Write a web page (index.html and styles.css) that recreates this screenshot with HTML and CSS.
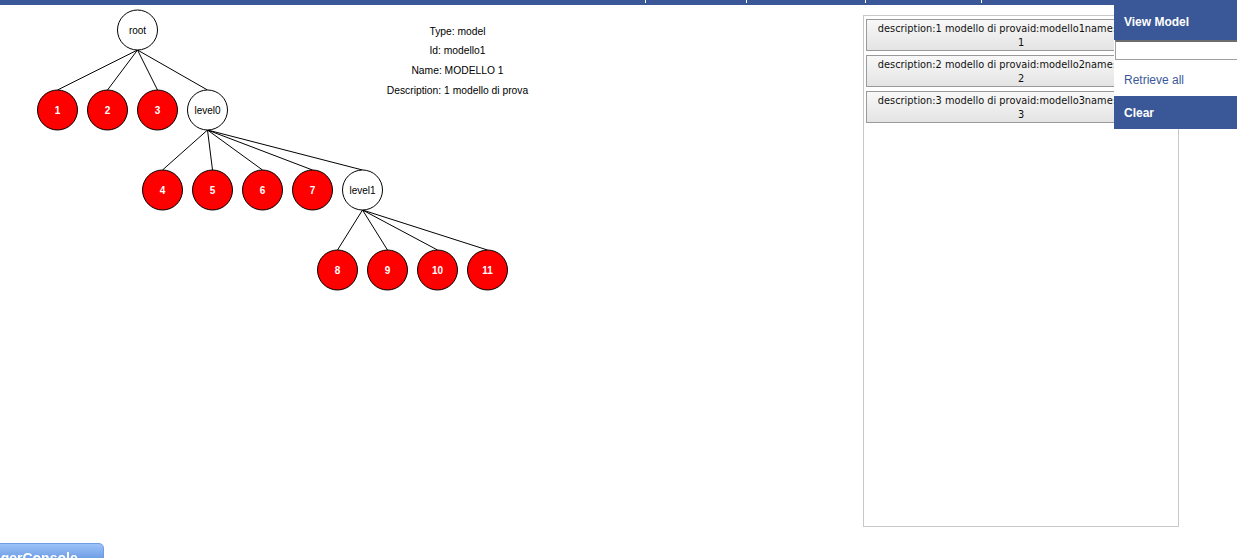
FILE: index.html
```html
<!DOCTYPE html>
<html>
<head>
<meta charset="utf-8">
<title>Model Viewer</title>
<link rel="stylesheet" href="styles.css">
</head>
<body>
<div class="topbar">
  <div class="tab tab-a"></div>
  <div class="tab tab-b"></div>
  <div class="tab tab-c"></div>
  <div class="tab tab-d"></div>
  <div class="tab tab-e"></div>
</div>

<div class="main">
  <svg class="tree" width="862" height="300" viewBox="0 5 862 300">
    <g class="edges">
      <line x1="137" y1="50" x2="57" y2="90"/>
      <line x1="137" y1="50" x2="107" y2="90"/>
      <line x1="137" y1="50" x2="157" y2="90"/>
      <line x1="137" y1="50" x2="207" y2="90"/>
      <line x1="207" y1="130" x2="162" y2="170"/>
      <line x1="207" y1="130" x2="212" y2="170"/>
      <line x1="207" y1="130" x2="262" y2="170"/>
      <line x1="207" y1="130" x2="312" y2="170"/>
      <line x1="207" y1="130" x2="362" y2="170"/>
      <line x1="362" y1="210" x2="337" y2="250"/>
      <line x1="362" y1="210" x2="387" y2="250"/>
      <line x1="362" y1="210" x2="437" y2="250"/>
      <line x1="362" y1="210" x2="487" y2="250"/>
    </g>
    <g class="node inner"><circle cx="137" cy="30" r="20"/><text x="137" y="34">root</text></g>
    <g class="node leaf"><circle cx="57" cy="110" r="20"/><text x="57" y="114">1</text></g>
    <g class="node leaf"><circle cx="107" cy="110" r="20"/><text x="107" y="114">2</text></g>
    <g class="node leaf"><circle cx="157" cy="110" r="20"/><text x="157" y="114">3</text></g>
    <g class="node inner"><circle cx="207" cy="110" r="20"/><text x="207" y="114">level0</text></g>
    <g class="node leaf"><circle cx="162" cy="190" r="20"/><text x="162" y="194">4</text></g>
    <g class="node leaf"><circle cx="212" cy="190" r="20"/><text x="212" y="194">5</text></g>
    <g class="node leaf"><circle cx="262" cy="190" r="20"/><text x="262" y="194">6</text></g>
    <g class="node leaf"><circle cx="312" cy="190" r="20"/><text x="312" y="194">7</text></g>
    <g class="node inner"><circle cx="362" cy="190" r="20"/><text x="362" y="194">level1</text></g>
    <g class="node leaf"><circle cx="337" cy="270" r="20"/><text x="337" y="274">8</text></g>
    <g class="node leaf"><circle cx="387" cy="270" r="20"/><text x="387" y="274">9</text></g>
    <g class="node leaf"><circle cx="437" cy="270" r="20"/><text x="437" y="274">10</text></g>
    <g class="node leaf"><circle cx="487" cy="270" r="20"/><text x="487" y="274">11</text></g>
    <g class="info">
      <text x="457" y="35">Type: model</text>
      <text x="457" y="54">Id: modello1</text>
      <text x="457" y="74">Name: MODELLO 1</text>
      <text x="457" y="94">Description: 1 modello di prova</text>
    </g>
  </svg>

  <div class="list-panel">
    <button class="item">description:1 modello di provaid:modello1name:MODELLO<br>1</button>
    <button class="item">description:2 modello di provaid:modello2name:MODELLO<br>2</button>
    <button class="item">description:3 modello di provaid:modello3name:MODELLO<br>3</button>
  </div>
</div>

<div class="menu">
  <div class="menu-head">View Model</div>
  <div class="menu-input"><input type="text" class="search"></div>
  <div class="menu-link">Retrieve all</div>
  <div class="menu-head menu-clear">Clear</div>
</div>

<div class="console-btn"><span>LoggerConsole</span></div>
</body>
</html>
```

FILE: styles.css
```css
html, body {
  margin: 0;
  padding: 0;
  background: #fff;
  overflow: hidden;
}

body {
  font-family: "Liberation Sans", Arial, sans-serif;
  width: 1237px;
  height: 558px;
}

.topbar {
  display: flex;
  height: 5px;
  background: #3a5898;
}

.tab {
  height: 3px;
  border-right: 1px solid #ffffff;
}
.tab-a { width: 645px; }
.tab-b { width: 100px; }
.tab-c { width: 118px; }
.tab-d { width: 115px; }
.tab-e { flex: 1; border-right: none; }

.main {
  display: flex;
  align-items: flex-start;
}

.tree {
  display: block;
  flex: 0 0 863px;
}

.edges line {
  stroke: #000;
  stroke-width: 1;
}

.node circle {
  stroke: #000;
  stroke-width: 1;
}
.node text {
  font-family: "Liberation Sans", Arial, sans-serif;
  font-size: 10px;
  text-anchor: middle;
}
.leaf circle { fill: #ff0000; }
.leaf text { fill: #fff; font-weight: bold; }
.inner circle { fill: #fff; }
.inner text { fill: #000; }

.info text {
  font-family: "Liberation Sans", Arial, sans-serif;
  font-size: 10.3px;
  text-anchor: middle;
  fill: #000;
}

.list-panel {
  margin-top: 10px;
  width: 310px;
  height: 504px;
  border: 1px solid #c8c8c8;
  padding: 3px 2px;
  display: flex;
  flex-direction: column;
  gap: 4px;
}

.item {
  display: block;
  flex: 0 0 32px;
  width: 310px;
  height: 32px;
  margin: 0;
  padding: 2px 0 0;
  border: 1px solid #9a9a9a;
  border-radius: 0;
  background: linear-gradient(#f8f8f8, #e4e4e4);
  font-family: "DejaVu Sans", Verdana, sans-serif;
  font-size: 9.8px;
  line-height: 14px;
  color: #111;
  text-align: center;
  white-space: nowrap;
  overflow: hidden;
}

.menu {
  position: absolute;
  top: 0;
  left: 1114px;
  width: 123px;
  font-family: "Liberation Sans", Arial, sans-serif;
  font-size: 12px;
}

.menu-head {
  box-sizing: border-box;
  height: 40px;
  background: #3a5898;
  color: #fff;
  font-weight: bold;
  padding: 4px 0 0 10px;
  display: flex;
  align-items: center;
}

.menu-input {
  height: 20px;
  background: #fff;
  padding-left: 1px;
}

.search {
  display: block;
  box-sizing: border-box;
  width: 130px;
  height: 20px;
  margin: 0;
  border: 1px solid #a0a0a0;
  border-top: 2px solid #6c6c6c;
  background: #fff;
  padding: 0;
}

.menu-link {
  box-sizing: border-box;
  height: 36px;
  background: #fff;
  color: #3a5898;
  padding: 3px 0 0 10px;
  display: flex;
  align-items: center;
}

.menu-clear {
  height: 33px;
  padding-top: 1px;
}

.console-btn {
  position: fixed;
  left: -34px;
  top: 543px;
  width: 138px;
  height: 22px;
  box-sizing: border-box;
  border: 1px solid #6f9de4;
  border-radius: 5px;
  background: linear-gradient(#9cc2f7, #5e90e0);
  color: #fff;
  font-family: "Liberation Sans", Arial, sans-serif;
  font-weight: bold;
  font-size: 14px;
  line-height: 14px;
  padding: 7px 0 0 8px;
  overflow: hidden;
}
```
